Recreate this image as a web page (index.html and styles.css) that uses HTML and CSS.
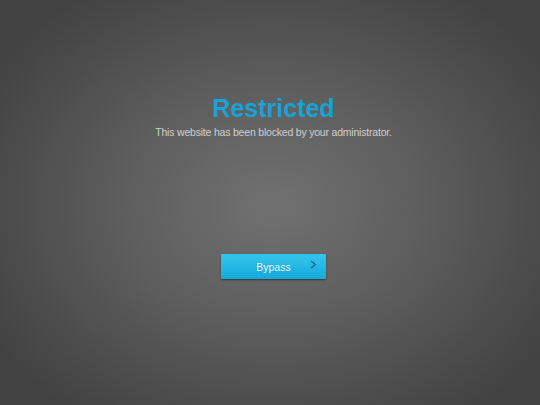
FILE: index.html
```html
<!DOCTYPE html>
<html>
<head>
<meta charset="utf-8">
<link rel="stylesheet" href="styles.css">
</head>
<body>
<div class="page">
  <h1 class="title">Restricted</h1>
  <p class="subtitle">This website has been blocked by your administrator.</p>
  <button class="bypass">
    <span class="label">Bypass</span>
    <svg class="arrow" width="7" height="9" viewBox="0 0 7 9"><path d="M1 1 L5.5 4.5 L1 8" fill="none" stroke="#1c6590" stroke-width="1.3"/></svg>
  </button>
</div>
</body>
</html>
```
FILE: styles.css
```css
html, body {
  margin: 0;
  padding: 0;
  height: 100%;
}
body {
  background: #454545;
  font-family: "Liberation Sans", Arial, sans-serif;
}
.page {
  box-sizing: border-box;
  height: 405px;
  display: flex;
  flex-direction: column;
  align-items: center;
  padding-top: 93px;
  padding-left: 7px;
  background: radial-gradient(ellipse 330px 260px at 272px 205px, #717171 0%, #5e5e5e 45%, #4c4c4c 80%, #424242 100%);
}
.title {
  margin: 0;
  font-size: 25px;
  line-height: 30px;
  font-weight: bold;
  color: #17a3d6;
}
.subtitle {
  margin: 3px 0 0;
  font-size: 10.5px;
  line-height: 13px;
  color: #cfcfcf;
  letter-spacing: -0.2px;
}
.bypass {
  margin-top: 115px;
  position: relative;
  width: 105px;
  height: 25px;
  padding: 0;
  border: none;
  border-radius: 1px;
  background: linear-gradient(#33c6ec, #14a9db);
  box-shadow: 0 1px 2px rgba(0,0,0,0.45);
  display: flex;
  align-items: center;
  justify-content: center;
  font-family: "Liberation Sans", Arial, sans-serif;
}
.label {
  font-size: 10.5px;
  color: #f4fbff;
  text-shadow: 0 0 1px rgba(0,60,100,0.3);
}
.arrow {
  position: absolute;
  left: 89px;
  top: 6px;
}
```
